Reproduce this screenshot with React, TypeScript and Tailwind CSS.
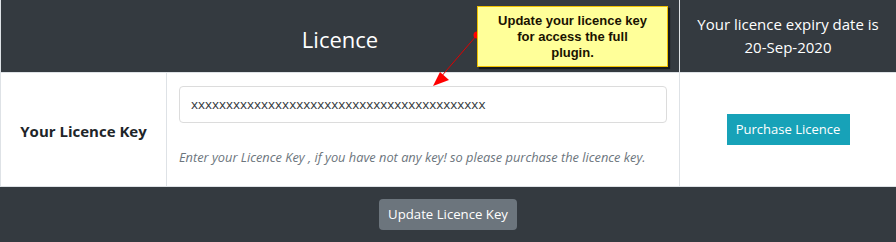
import React from 'react'

const sans = { fontFamily: '"Open Sans", "Noto Sans", sans-serif' }

export default function App() {
  return (
    <div className="relative w-[896px] h-[242px] bg-white" style={sans}>
      <div className="flex h-[73px] border-b border-[#dee2e6] bg-[#343a40] text-white">
        <div className="flex flex-1 items-center justify-center border-l border-[#dee2e6] pt-[7px] text-[22px]">
          Licence
        </div>
        <div className="flex w-[217px] flex-col items-center justify-center border-l border-[#dee2e6] text-[15px] leading-[23px]">
          <span>Your licence expiry date is</span>
          <span>20-Sep-2020</span>
        </div>
      </div>

      <div className="flex h-[114px] border-b border-[#dee2e6]">
        <div className="flex w-[166px] items-center justify-center border-l border-[#dee2e6] pt-1 text-[15px] font-bold text-[#212529]">
          Your Licence Key
        </div>
        <div className="flex flex-1 flex-col border-l border-[#dee2e6] pl-[12px] pr-[12px] pt-[13px]">
          <div className="flex h-[37px] items-center rounded-[4px] border border-[#dcdcdc] bg-white pl-[11px] text-[13.4px] text-[#32373c]">
            xxxxxxxxxxxxxxxxxxxxxxxxxxxxxxxxxxxxxxxxxx
          </div>
          <div className="mt-[25px] text-[12.8px] italic text-[#6c757d]">
            Enter your Licence Key , if you have not any key! so please purchase the licence key.
          </div>
        </div>
        <div className="flex w-[217px] items-center justify-center border-l border-[#dee2e6]">
          <button className="h-[31px] w-[123px] bg-[#17a2b8] text-[13px] text-white">
            Purchase Licence
          </button>
        </div>
      </div>

      <div className="flex h-[55px] justify-center bg-[#343a40] pt-[12px]">
        <button className="h-[31px] w-[138px] rounded-[4px] bg-[#6c757d] text-[13.2px] text-white">
          Update Licence Key
        </button>
      </div>

      <svg className="absolute left-0 top-0" width="896" height="242">
        <line x1="477" y1="35" x2="440" y2="78" stroke="#e00000" strokeWidth="1" />
        <polygon points="433,86 440,72 449,80" fill="#ff0000" />
        <circle cx="477" cy="35" r="3.5" fill="#ff0000" />
      </svg>

      <div
        className="absolute left-[477px] top-[6px] flex h-[61px] w-[191px] flex-col items-center justify-center border border-[#f0c000] bg-[#ffff99] text-center text-[13px] font-bold leading-[16px] text-[#1a1200] shadow-[2px_2px_1px_rgba(0,0,0,0.55)]"
        style={{ fontFamily: '"Liberation Sans", Arial, sans-serif' }}
      >
        <span>Update your licence key</span>
        <span>for access the full</span>
        <span>plugin.</span>
      </div>
    </div>
  )
}
